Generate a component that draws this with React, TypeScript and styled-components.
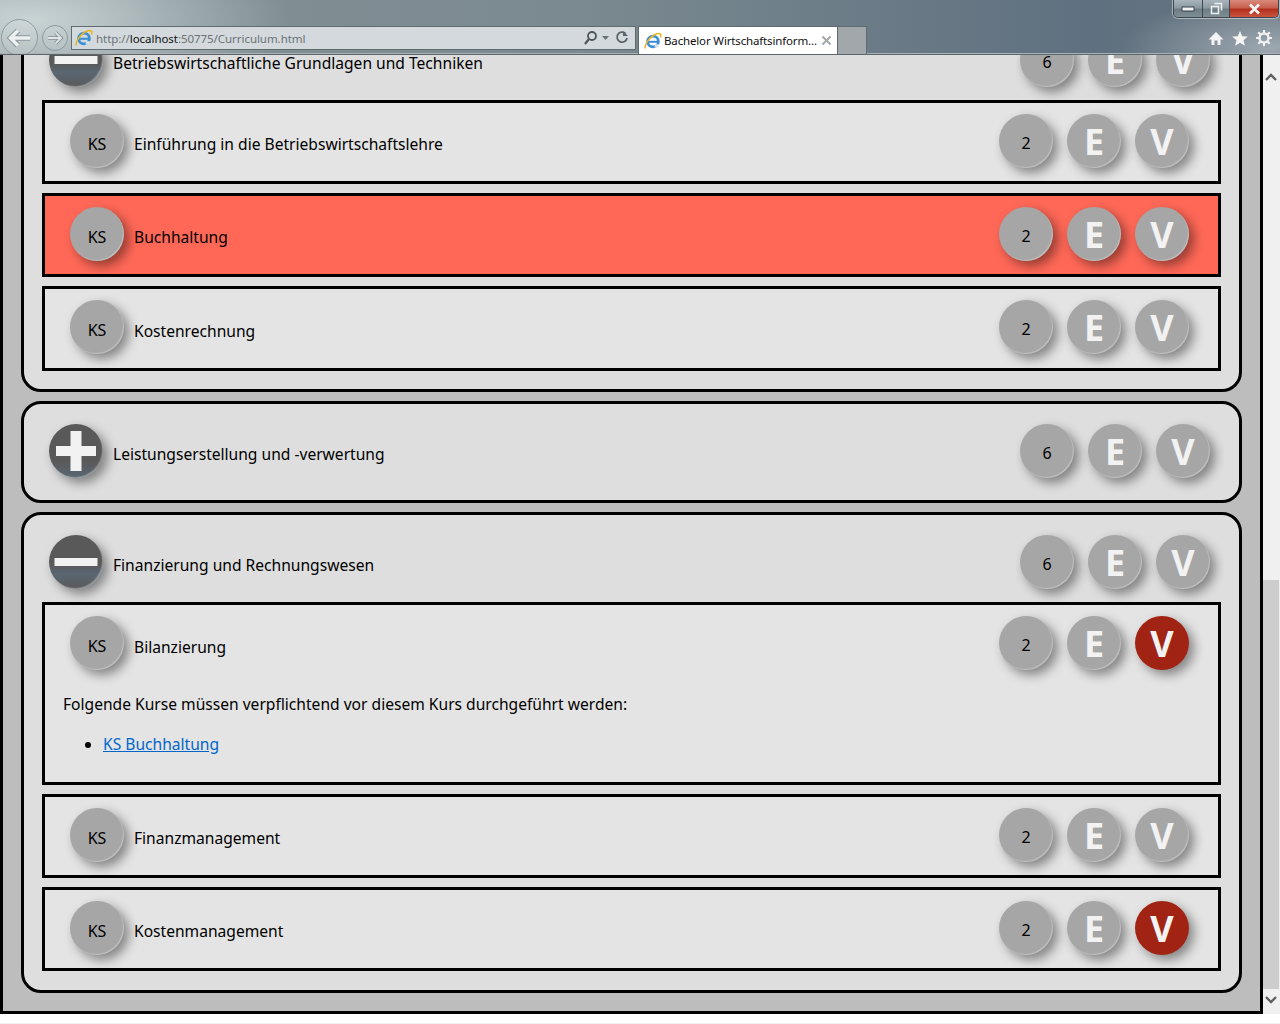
import React from "react";
import styled, { createGlobalStyle } from "styled-components";

const Global = createGlobalStyle`
  html, body { margin: 0; padding: 0; background: #fff; }
  body { font-family: "Noto Sans", "Open Sans", sans-serif; color: #000; }
`;

const Window = styled.div`
  width: 1280px;
  height: 1024px;
  overflow: hidden;
  display: flex;
  flex-direction: column;
`;

const Chrome = styled.header`
  box-sizing: border-box;
  height: 55px;
  flex: none;
  overflow: hidden;
  border-bottom: 1px solid #59666c;
  box-shadow: inset 0 -1px 0 #aab2b6;
  background:
    radial-gradient(ellipse 260px 90px at 30px 20px, rgba(205, 216, 216, 0.95), rgba(205, 216, 216, 0) 100%),
    radial-gradient(ellipse 150px 50px at 1270px 48px, rgba(170, 180, 188, 0.8), rgba(170, 180, 188, 0) 100%),
    linear-gradient(90deg, #849297 0%, #7b8a90 45%, #5f7080 85%, #66757f 100%);
  display: flex;
  flex-direction: column;
`;

const TitleRow = styled.div`
  height: 26px;
  flex: none;
  display: flex;
  justify-content: flex-end;
  padding-right: 1px;
`;

const Controls = styled.div`
  display: flex;
  height: 18px;
  box-sizing: border-box;
  width: 106px;
  border: 1px solid #3e474d;
  border-top: none;
  border-radius: 0 0 5px 5px;
  overflow: hidden;
  box-shadow: 0 0 0 1px rgba(255, 255, 255, 0.45);
`;

const ControlButton = styled.div<{ $w: number; $close?: boolean }>`
  width: ${(p) => p.$w}px;
  box-sizing: border-box;
  flex: none;
  display: flex;
  align-items: center;
  justify-content: center;
  border-right: ${(p) => (p.$close ? "none" : "1px solid #3e474d")};
  background: ${(p) =>
    p.$close
      ? "linear-gradient(#d98a7c 0%, #c8604f 45%, #b3301e 55%, #c9553f 100%)"
      : "linear-gradient(#a8b4ba 0%, #8d9aa1 45%, #6f7d85 55%, #7f8d95 100%)"};
`;

const NavRow = styled.div`
  height: 28px;
  display: flex;
  align-items: flex-start;
`;

const BackButton = styled.div`
  box-sizing: border-box;
  width: 37px;
  height: 37px;
  margin: -7px 0 0 1px;
  flex: none;
  border-radius: 50%;
  border: 1px solid #8d9a9e;
  background: rgba(255, 255, 255, 0.1);
  display: flex;
  align-items: center;
  justify-content: center;
`;

const ForwardButton = styled.div`
  box-sizing: border-box;
  width: 26px;
  height: 26px;
  margin: -1px 0 0 4px;
  flex: none;
  border-radius: 50%;
  border: 1px solid #8d9a9e;
  background: rgba(255, 255, 255, 0.08);
  display: flex;
  align-items: center;
  justify-content: center;
`;

const AddressBar = styled.div`
  box-sizing: border-box;
  width: 565px;
  height: 24px;
  margin-left: 3px;
  flex: none;
  background: #d3d9dc;
  border: 1px solid #5e6c72;
  display: flex;
  align-items: center;
  padding: 0 4px 0 3px;
`;

const Url = styled.span`
  flex: 1;
  margin-left: 3px;
  font-size: 11.5px;
  font-family: "Noto Sans", sans-serif;
  color: #6b7378;
  letter-spacing: -0.05px;
  b { font-weight: 400; color: #111; }
`;

const Tab = styled.div`
  box-sizing: border-box;
  width: 200px;
  height: 28px;
  margin-left: 2px;
  flex: none;
  background: #fff;
  border: 1px solid #5e6c72;
  border-bottom: none;
  display: flex;
  align-items: center;
  padding: 0 5px 0 5px;
`;

const TabTitle = styled.span`
  flex: 1;
  margin-left: 2px;
  font-size: 11.5px;
  color: #111;
  white-space: nowrap;
  letter-spacing: -0.15px;
`;

const NewTab = styled.div`
  box-sizing: border-box;
  width: 29px;
  height: 28px;
  flex: none;
  background: #a1a7aa;
  border: 1px solid #5e6c72;
  border-width: 1px 1px 0 0;
`;

const Tools = styled.div`
  margin-left: auto;
  padding: 4px 8px 0 0;
  display: flex;
  gap: 8px;
  align-items: center;
`;

const Body = styled.div`
  display: flex;
  height: 959px;
  flex: none;
`;

const Page = styled.main`
  box-sizing: border-box;
  width: 1263px;
  height: 959px;
  flex: none;
  overflow: hidden;
  background: #bdbdbd;
  border: 3px solid #000;
  border-top: none;
  padding: 0 18px;
`;

const Stack = styled.div`
  margin-top: -45px;
  display: flex;
  flex-direction: column;
  gap: 9px;
`;

const Panel = styled.section`
  box-sizing: border-box;
  width: 1221px;
  border: 3px solid #000;
  border-radius: 20px;
  background: #dedede;
  padding: 0 18px 9px 18px;
`;

const PanelHead = styled.div`
  height: 87px;
  box-sizing: border-box;
  margin: 0 -18px;
  padding: 20px 29px 0 25px;
  display: flex;
  align-items: flex-start;
`;

const Rows = styled.div`
  display: flex;
  flex-direction: column;
  gap: 9px;
  padding-bottom: 10px;
`;

const Row = styled.article<{ $hot?: boolean; $tall?: boolean }>`
  box-sizing: border-box;
  min-height: ${(p) => (p.$tall ? 85 : 84)}px;
  margin-bottom: ${(p) => (p.$tall ? -1 : 0)}px;
  border: 3px solid #000;
  background: ${(p) => (p.$hot ? "#ff6857" : "#e4e4e4")};
`;

const RowHead = styled.div`
  height: 78px;
  box-sizing: border-box;
  padding: 11px 29px 0 25px;
  display: flex;
  align-items: flex-start;
`;

const Circle = styled.div<{ $bg?: string }>`
  width: 54px;
  height: 54px;
  flex: none;
  border-radius: 50%;
  background: ${(p) => p.$bg || "#a6a6a6"};
  box-shadow: 5px 5px 11px rgba(0, 0, 0, 0.42)${(p) => (p.$bg ? "" : ", inset -1px -1px 1px rgba(255, 255, 255, 0.3)")};
  display: flex;
  align-items: center;
  justify-content: center;
`;

const SmallLabel = styled.span`
  font-size: 16px;
  line-height: 20px;
  padding-top: 4px;
  color: #000;
`;

const CourseTag = styled(SmallLabel)`
  padding-top: 6px;
`;

const BigLetter = styled.span`
  font-family: "Noto Sans", sans-serif;
  font-weight: 700;
  font-size: 36px;
  line-height: 54px;
  color: #f2f2f2;
  padding-top: 2px;
`;

const Toggle = styled(Circle)<{ $open: boolean }>`
  background: ${(p) =>
    p.$open
      ? "linear-gradient(#595959 0%, #595959 55%, #5a6773 72%, #595959 100%)"
      : "linear-gradient(#595959 0%, #595959 68%, #5a6773 100%)"};
`;

const Title = styled.span<{ $drop?: boolean }>`
  flex: 1;
  margin-left: 10px;
  font-size: 15.6px;
  line-height: 22px;
  padding-top: ${(p) => (p.$drop ? 20 : 19)}px;
  color: #000;
`;

const Badges = styled.div`
  display: flex;
  gap: 14px;
`;

const Details = styled.div`
  padding: 0 18px 27px 18px;
  font-size: 15.6px;
  line-height: 22px;
`;

const DetailText = styled.p`
  margin: 0;
  padding-top: 10px;
`;

const List = styled.ul`
  margin: 18px 0 0;
  padding: 0 0 0 40px;
`;

const CourseLink = styled.a`
  color: #0066cc;
  text-decoration: underline;
`;

const Scrollbar = styled.aside`
  width: 17px;
  flex: none;
  background: #f0f0f0;
  display: flex;
  flex-direction: column;
  box-sizing: border-box;
  padding-right: 1px;
`;

const ScrollTop = styled.div`
  box-sizing: border-box;
  height: 45px;
  padding-top: 18px;
  flex: none;
  display: flex;
  justify-content: center;
`;

const ScrollSpace = styled.div`
  flex: 1;
`;

const Thumb = styled.div`
  height: 409px;
  flex: none;
  background: #cdcdcd;
`;

const ScrollBottom = styled.div`
  height: 25px;
  flex: none;
  display: flex;
  justify-content: center;
  padding-top: 7px;
  box-sizing: border-box;
`;

const Foot = styled.div`
  flex: 1;
  background: #fff;
  border-bottom: 1px solid #f0f0f0;
`;

const IeLogo = () => (
  <svg width="18" height="18" viewBox="0 0 18 18" style={{ flex: "none" }}>
    <circle cx="9" cy="9.5" r="5.4" fill="none" stroke="#3a8fd6" strokeWidth="2.8" />
    <path d="M4 9.8h10.5" stroke="#3a8fd6" strokeWidth="2" />
    <path d="M11 12.300h5l-2 3-3.500.5z" fill="#d9e1e4" />
    <path d="M1.500 16.500C-.5 13.500 6 4 13 1.800c3.500-1 4.500.8 3.500 3.700" fill="none" stroke="#f0b41c" strokeWidth="1.5" />
  </svg>
);

const Chev = ({ up }: { up?: boolean }) => (
  <svg width="12" height="8" viewBox="0 0 12 8">
    <path d={up ? "M1 7l5-5 5 5" : "M1 1l5 5 5-5"} fill="none" stroke="#5f5f5f" strokeWidth="2.4" />
  </svg>
);

const Toggler = ({ open }: { open: boolean }) => (
  <Toggle $open={open}>
    <svg width="44" height="44" viewBox="0 0 44 44">
      {open ? (
        <rect x="0.5" y="18" width="43" height="8" fill="#f2f2f2" />
      ) : (
        <path d="M16.500 2h11v15H42v10H27.500v15h-11V27H2V17h14.500z" fill="#f2f2f2" />
      )}
    </svg>
  </Toggle>
);

const BadgeSet = ({ n, vActive }: { n: number; vActive?: boolean }) => (
  <Badges>
    <Circle><SmallLabel>{n}</SmallLabel></Circle>
    <Circle><BigLetter>E</BigLetter></Circle>
    <Circle $bg={vActive ? "#a02313" : undefined}><BigLetter>V</BigLetter></Circle>
  </Badges>
);

const Course = ({ title, hot, vActive, tall, drop, children }: { title: string; hot?: boolean; vActive?: boolean; tall?: boolean; drop?: boolean; children?: React.ReactNode }) => (
  <Row $hot={hot} $tall={tall}>
    <RowHead>
      <Circle><CourseTag>KS</CourseTag></Circle>
      <Title $drop={drop}>{title}</Title>
      <BadgeSet n={2} vActive={vActive} />
    </RowHead>
    {children}
  </Row>
);

const Head = ({ title, open }: { title: string; open: boolean }) => (
  <PanelHead>
    <Toggler open={open} />
    <Title>{title}</Title>
    <BadgeSet n={6} />
  </PanelHead>
);

export default function App() {
  return (
    <Window>
      <Global />
      <Chrome>
        <TitleRow>
          <Controls>
            <ControlButton $w={29}>
              <svg width="14" height="6" viewBox="0 0 14 6"><rect x="1" y="1" width="12" height="4" fill="#f2f2f2" stroke="#39434a" strokeWidth="1" /></svg>
            </ControlButton>
            <ControlButton $w={27}>
              <svg width="13" height="13" viewBox="0 0 13 13"><path d="M4.500 1.500h7v7M1.500 4.500h7v7h-7z" fill="none" stroke="#eef1f2" strokeWidth="1.5" /></svg>
            </ControlButton>
            <ControlButton $w={48} $close>
              <svg width="13" height="12" viewBox="0 0 13 12"><path d="M2 1.500l9 9M11 1.500l-9 9" stroke="#f5f5f5" strokeWidth="2.6" /></svg>
            </ControlButton>
          </Controls>
        </TitleRow>
        <NavRow>
          <BackButton>
            <svg width="28" height="22" viewBox="0 0 28 22">
              <path d="M12 3.500L4.500 11l7.500 7.500M5 11h19" fill="none" stroke="#8b979b" strokeWidth="5.5" />
              <path d="M12 3.500L4.500 11l7.500 7.500M5 11h19" fill="none" stroke="#eef1f1" strokeWidth="3.5" />
            </svg>
          </BackButton>
          <ForwardButton>
            <svg width="18" height="16" viewBox="0 0 18 16">
              <path d="M9.500 2.500L15 8l-5.500 5.500M14.500 8H2" fill="none" stroke="#828e92" strokeWidth="3.6" />
              <path d="M9.500 2.500L15 8l-5.500 5.500M14.500 8H2" fill="none" stroke="#dfe4e5" strokeWidth="1.8" />
            </svg>
          </ForwardButton>
          <AddressBar>
            <IeLogo />
            <Url>http://<b>localhost</b>:50775/Curriculum.html</Url>
            <svg width="48" height="16" viewBox="0 0 48 16">
              <circle cx="9" cy="6" r="4" fill="none" stroke="#4c565b" strokeWidth="1.8" />
              <path d="M6 9l-4 5" stroke="#4c565b" strokeWidth="2.2" />
              <path d="M19 6h7l-3.500 4z" fill="#6a7378" />
              <path d="M42.500 3.500A5 5 0 1 0 44 8" fill="none" stroke="#59646a" strokeWidth="1.8" />
              <path d="M40 1v5h5z" fill="#59646a" />
            </svg>
          </AddressBar>
          <Tab>
            <IeLogo />
            <TabTitle>Bachelor Wirtschaftsinform...</TabTitle>
            <svg width="11" height="11" viewBox="0 0 11 11"><path d="M1.500 1.500l8 8M9.500 1.500l-8 8" stroke="#a3a8ab" strokeWidth="2" /></svg>
          </Tab>
          <NewTab />
          <Tools>
            <svg width="16" height="15" viewBox="0 0 16 15"><path d="M8 1L.5 8.500h3V14h3V9.500h3V14h3V8.500h3z" fill="#f5f5f5" /></svg>
            <svg width="16" height="15" viewBox="0 0 16 15"><path d="M8 0l2.200 5.200 5.600.4-4.300 3.600 1.400 5.500L8 11.800 3.100 14.700l1.400-5.500L.2 5.600l5.600-.4z" fill="#f5f5f5" /></svg>
            <svg width="16" height="16" viewBox="0 0 16 16">
              <circle cx="8" cy="8" r="4.5" fill="none" stroke="#f0f0f0" strokeWidth="2.4" />
              <path d="M8 0v3M8 13v3M0 8h3M13 8h3M2.300 2.300l2.100 2.100M11.600 11.600l2.100 2.100M13.700 2.300l-2.100 2.100M4.400 11.600l-2.100 2.100" stroke="#f0f0f0" strokeWidth="2.2" />
            </svg>
          </Tools>
        </NavRow>
      </Chrome>
      <Body>
        <Page>
          <Stack>
            <Panel>
              <Head title="Betriebswirtschaftliche Grundlagen und Techniken" open />
              <Rows>
                <Course title="Einführung in die Betriebswirtschaftslehre" />
                <Course title="Buchhaltung" hot />
                <Course title="Kostenrechnung" tall drop />
              </Rows>
            </Panel>
            <Panel>
              <Head title="Leistungserstellung und -verwertung" open={false} />
            </Panel>
            <Panel>
              <Head title="Finanzierung und Rechnungswesen" open />
              <Rows>
                <Course title="Bilanzierung" vActive drop>
                  <Details>
                    <DetailText>Folgende Kurse müssen verpflichtend vor diesem Kurs durchgeführt werden:</DetailText>
                    <List>
                      <li><CourseLink href="#">KS Buchhaltung</CourseLink></li>
                    </List>
                  </Details>
                </Course>
                <Course title="Finanzmanagement" />
                <Course title="Kostenmanagement" vActive />
              </Rows>
            </Panel>
          </Stack>
        </Page>
        <Scrollbar>
          <ScrollTop><Chev up /></ScrollTop>
          <ScrollSpace />
          <Thumb />
          <ScrollBottom><Chev /></ScrollBottom>
        </Scrollbar>
      </Body>
      <Foot />
    </Window>
  );
}
